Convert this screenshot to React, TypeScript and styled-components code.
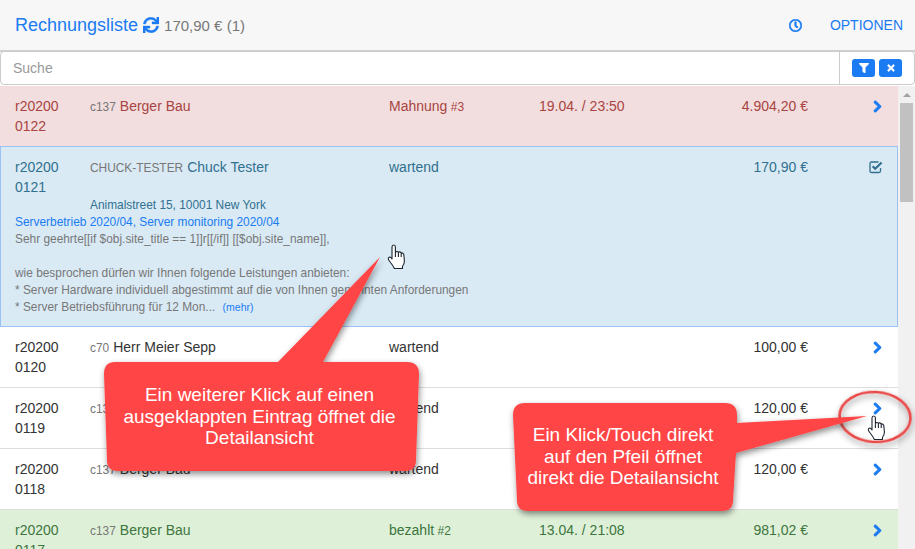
import React from "react";
import styled, { createGlobalStyle } from "styled-components";
import { FaSync, FaRegClock, FaFilter, FaTimes, FaChevronRight } from "react-icons/fa";

const Global = createGlobalStyle`
  html, body { margin: 0; padding: 0; background: #fff; }
  * { box-sizing: border-box; }
  body { font-family: "Liberation Sans", Arial, sans-serif; font-size: 14px; color: #333; }
`;

const Page = styled.div`
  position: relative;
  width: 915px;
  height: 549px;
  overflow: hidden;
`;

const Header = styled.header`
  height: 52px;
  background: #f7f7f7;
  border-bottom: 2px solid #cfcfcf;
  display: flex;
  align-items: center;
  padding: 0 12px 0 15px;
`;

const Title = styled.span`
  font-size: 18px;
  color: #1a7bf2;
`;

const RefreshIcon = styled(FaSync)`
  color: #1a7bf2;
  font-size: 16px;
  margin: 0 5px 0 5px;
  stroke: currentColor;
  stroke-width: 12;
`;

const Sum = styled.span`
  font-size: 15px;
  color: #777;
  flex: 1;
`;

const ClockIcon = styled(FaRegClock)`
  color: #1a7bf2;
  font-size: 13px;
  margin-right: 28px;
  stroke: currentColor;
  stroke-width: 25;
`;

const Options = styled.span`
  font-size: 14px;
  color: #1a7bf2;
`;

const SearchBar = styled.div`
  height: 34px;
  margin-top: -1px;
  display: flex;
  background: #fff;
  border: 1px solid #ccc;
  border-radius: 4px;
`;

const SearchText = styled.div`
  flex: 1;
  padding-left: 12px;
  line-height: 32px;
  color: #999;
  font-size: 14px;
`;

const SearchActions = styled.div`
  width: 75px;
  border-left: 1px solid #ccc;
  display: flex;
  align-items: center;
  gap: 4px;
  padding-left: 12px;
`;

const SmallButton = styled.span`
  width: 23px;
  height: 18px;
  border-radius: 3px;
  background: #1a7bf2;
  color: #fff;
  display: flex;
  align-items: center;
  justify-content: center;
  font-size: 10px;
  & svg {
    stroke: currentColor;
    stroke-width: 25;
  }
`;

const Body = styled.div`
  display: flex;
  align-items: flex-start;
  margin-top: 1px;
`;

const List = styled.main`
  width: 898px;
`;

const tones = {
  danger: { bg: "#f2dede", fg: "#a94442" },
  info: { bg: "#d9eaf5", fg: "#31708f" },
  success: { bg: "#dff0d8", fg: "#3c763d" },
  plain: { bg: "#fff", fg: "#333" },
};
type Tone = keyof typeof tones;

const RowBox = styled.article<{ $tone: Tone }>`
  background: ${(p) => tones[p.$tone].bg};
  color: ${(p) => tones[p.$tone].fg};
  padding: 10px 15px 10px;
  border-bottom: 1px solid ${(p) => (p.$tone === "plain" ? "#ddd" : "transparent")};
  &.open {
    border: 1px solid #9cc2f5;
    padding: 10px 14px 10px;
  }
  &.first { height: 60px; }
`;

const RowGrid = styled.div`
  display: grid;
  grid-template-columns: 75px 299px 150px 100px 169px 1fr;
  line-height: 20px;
  height: 40px;
`;

const Number = styled.div`
  width: 50px;
  word-break: break-all;
`;

const Code = styled.small`
  font-size: 11.9px;
  color: #777;
  margin-right: 4px;
`;

const Small = styled.small`
  font-size: 12px;
`;

const Amount = styled.div`
  text-align: right;
`;

const Action = styled.div`
  justify-self: end;
  height: 20px;
  display: flex;
  align-items: center;
`;

const Chevron = styled(FaChevronRight)`
  color: #1a7bf2;
  font-size: 13px;
  margin-right: -1px;
  stroke: currentColor;
  stroke-width: 40;
`;

const CheckIcon = styled.svg`
  width: 14px;
  height: 14px;
`;

const Details = styled.div`
  font-size: 11.9px;
  line-height: 17px;
  color: #777;
`;

const Address = styled.div`
  padding-left: 75px;
  color: #31708f;
`;

const Services = styled.div`
  color: #1a7bf2;
`;

const More = styled.span`
  color: #1a7bf2;
  font-size: 10.5px;
  margin-left: 4px;
`;

const Scrollbar = styled.aside`
  width: 17px;
  height: 464px;
  background: #f1f1f1;
  position: relative;
  display: flex;
  flex-direction: column;
  align-items: center;
`;

const ScrollArrow = styled.span`
  margin-top: 7px;
  width: 0;
  height: 0;
  border-left: 4px solid transparent;
  border-right: 4px solid transparent;
  border-bottom: 4px solid #a3a3a3;
`;

const ScrollThumb = styled.span`
  margin-top: 6px;
  width: 13px;
  height: 99px;
  background: #c1c1c1;
`;

const Overlay = styled.svg`
  position: absolute;
  inset: 0;
  pointer-events: none;
`;

const CalloutText = styled.div<{ $left: number; $top: number; $width: number }>`
  position: absolute;
  left: ${(p) => p.$left}px;
  top: ${(p) => p.$top}px;
  width: ${(p) => p.$width}px;
  text-align: center;
  color: #fff;
  font-size: 19px;
  line-height: 21.7px;
`;

type Item = {
  no: string;
  code: string;
  name: string;
  status: string;
  statusNo?: string;
  date?: string;
  amount: string;
  tone: Tone;
};

const items: Item[] = [
  { no: "r202000120", code: "c70", name: "Herr Meier Sepp", status: "wartend", amount: "100,00 €", tone: "plain" },
  { no: "r202000119", code: "c137", name: "Berger Bau", status: "wartend", amount: "120,00 €", tone: "plain" },
  { no: "r202000118", code: "c137", name: "Berger Bau", status: "wartend", amount: "120,00 €", tone: "plain" },
  { no: "r202000117", code: "c137", name: "Berger Bau", status: "bezahlt", statusNo: "#2", date: "13.04. / 21:08", amount: "981,02 €", tone: "success" },
];

function Cells({ item, icon }: { item: Item; icon: React.ReactNode }) {
  return (
    <RowGrid>
      <Number>{item.no}</Number>
      <div>
        <Code>{item.code}</Code>
        {item.name}
      </div>
      <div>
        {item.status}
        {item.statusNo ? <Small> {item.statusNo}</Small> : null}
      </div>
      <div>{item.date}</div>
      <Amount>{item.amount}</Amount>
      <Action>{icon}</Action>
    </RowGrid>
  );
}

const handPath =
  "M4 14 L4 2 Q4 0 5.7 0 Q7.4 0 7.4 2 L7.4 7.5 Q9 5.8 10.4 7.2 Q12 6.2 13.2 8 Q15 7.6 15.8 9.5 L16.4 16 Q16.4 19 14.6 21 L14.4 23.5 L6.4 23.5 Q5 20.5 2.5 17.5 L0.4 14.5 Q0 12.2 2 12 Q3 12.2 4 14 Z M7.4 7.5 L7.4 12 M10.4 7.2 L10.4 12 M13.2 8 L13.2 12";

const Hand = ({ x, y }: { x: number; y: number }) => (
  <g transform={`translate(${x} ${y})`}>
    <path d={handPath} fill="#fff" stroke="#1d2430" strokeWidth="1.1" strokeLinejoin="round" />
  </g>
);

export default function App() {
  return (
    <Page>
      <Global />
      <Header>
        <Title>Rechnungsliste</Title>
        <RefreshIcon />
        <Sum>170,90 € (1)</Sum>
        <ClockIcon />
        <Options>OPTIONEN</Options>
      </Header>
      <SearchBar>
        <SearchText>Suche</SearchText>
        <SearchActions>
          <SmallButton>
            <FaFilter />
          </SmallButton>
          <SmallButton>
            <FaTimes />
          </SmallButton>
        </SearchActions>
      </SearchBar>
      <Body>
        <List>
          <RowBox $tone="danger" className="first">
            <Cells
              item={{ no: "r202000122", code: "c137", name: "Berger Bau", status: "Mahnung", statusNo: "#3", date: "19.04. / 23:50", amount: "4.904,20 €", tone: "danger" }}
              icon={<Chevron />}
            />
          </RowBox>
          <RowBox $tone="info" className="open">
            <Cells
              item={{ no: "r202000121", code: "CHUCK-TESTER", name: "Chuck Tester", status: "wartend", amount: "170,90 €", tone: "info" }}
              icon={
                <CheckIcon viewBox="0 0 14 14">
                  <path
                    d="M11.5 8 L11.5 11 Q11.5 12.5 10 12.5 L2.5 12.5 Q1 12.5 1 11 L1 3.5 Q1 2 2.5 2 L9.5 2"
                    fill="none"
                    stroke="currentColor"
                    strokeWidth="1.3"
                  />
                  <path d="M3.6 6.2 L6.2 8.8 L12.6 2.4" fill="none" stroke="currentColor" strokeWidth="2.1" />
                </CheckIcon>
              }
            />
            <Details>
              <Address>Animalstreet 15, 10001 New York</Address>
              <Services>Serverbetrieb 2020/04, Server monitoring 2020/04</Services>
              Sehr geehrte[[if $obj.site_title == 1]]r[[/if]] [[$obj.site_name]],
              <br />
              <br />
              wie besprochen dürfen wir Ihnen folgende Leistungen anbieten:
              <br />
              * Server Hardware individuell abgestimmt auf die von Ihnen genannten Anforderungen
              <br />
              * Server Betriebsführung für 12 Mon... <More>(mehr)</More>
            </Details>
          </RowBox>
          {items.map((item) => (
            <RowBox key={item.no} $tone={item.tone}>
              <Cells item={item} icon={<Chevron />} />
            </RowBox>
          ))}
        </List>
        <Scrollbar>
          <ScrollArrow />
          <ScrollThumb />
        </Scrollbar>
      </Body>
      <Overlay width="915" height="549" viewBox="0 0 915 549">
        <defs>
          <filter id="shade" x="-20%" y="-20%" width="140%" height="140%">
            <feDropShadow dx="1" dy="3" stdDeviation="3" floodColor="#000" floodOpacity="0.45" />
          </filter>
        </defs>
        <ellipse cx="875" cy="417" rx="35.5" ry="25" fill="none" stroke="#e84a4a" strokeWidth="2.6" transform="rotate(3 875 417)" filter="url(#shade)" />
        <path
          d="M115 362 L278 362 L380 257 L323 362 L407 362 Q419 362 419 374 L416 460 Q416 471 405 471 L118 471 Q107 471 107 460 L104 374 Q104 362 115 362 Z"
          fill="#ff4444"
          filter="url(#shade)"
        />
        <path
          d="M525 403 L725 403 Q737 403 737 415 L737 423 L867 416 L736 453 L733 500 Q733 511 722 511 L528 511 Q517 511 517 500 L513 415 Q513 403 525 403 Z"
          fill="#ff4444"
          filter="url(#shade)"
        />
        <Hand x={388} y={245} />
        <Hand x={868} y={416} />
      </Overlay>
      <CalloutText $left={102} $top={384} $width={315}>
        Ein weiterer Klick auf einen
        <br />
        ausgeklappten Eintrag öffnet die
        <br />
        Detailansicht
      </CalloutText>
      <CalloutText $left={511} $top={424} $width={224}>
        Ein Klick/Touch direkt
        <br />
        auf den Pfeil öffnet
        <br />
        direkt die Detailansicht
      </CalloutText>
    </Page>
  );
}
